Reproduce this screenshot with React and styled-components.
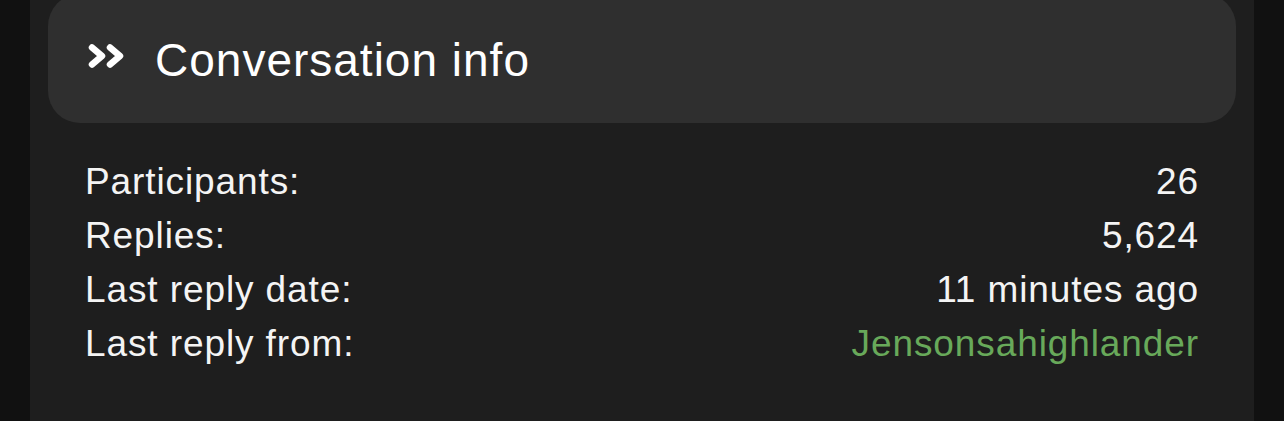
import React from "react";
import styled, { createGlobalStyle } from "styled-components";

const GlobalStyle = createGlobalStyle`
  html, body {
    margin: 0;
    padding: 0;
    background: #111111;
  }
  body {
    font-family: "Liberation Sans", Arial, Helvetica, sans-serif;
    -webkit-font-smoothing: antialiased;
  }
`;

const Page = styled.div`
  display: flex;
  height: 421px;
  overflow: hidden;
  padding: 0 30px;
`;

const Card = styled.section`
  flex: 1;
  background: #1e1e1e;
  padding: 0 18px;
  color: #f4f4f4;
`;

const Header = styled.div`
  margin-top: -6px;
  height: 129px;
  box-sizing: border-box;
  background: #2f2f2f;
  border-radius: 32px;
  display: flex;
  align-items: center;
  gap: 29px;
  padding: 3px 40px 0;
`;

const Icon = styled.svg`
  flex-shrink: 0;
  margin-bottom: 8px;
`;

const Title = styled.h2`
  margin: 0;
  font-size: 46px;
  font-weight: 400;
  letter-spacing: 1px;
  color: #ffffff;
`;

const Info = styled.dl`
  margin: 32px 0 0;
  padding: 0 37px;
`;

const Row = styled.div`
  display: flex;
  justify-content: space-between;
  font-size: 37px;
  line-height: 54px;
  letter-spacing: 0.9px;
`;

const Label = styled.dt`
  margin: 0;
`;

const Value = styled.dd`
  margin: 0;
  color: ${(p) => (p.$link ? "#68a95a" : "#f4f4f4")};
`;

const Chevrons = () => (
  <Icon width="38" height="24" viewBox="0 0 38 24" aria-hidden="true">
    <g
      fill="none"
      stroke="#ffffff"
      strokeWidth="6.5"
      strokeLinecap="round"
      strokeLinejoin="round"
    >
      <polyline points="4,3.5 14,12 4,20.5" />
      <polyline points="22,3.5 32,12 22,20.5" />
    </g>
  </Icon>
);

const rows = [
  { label: "Participants:", value: "26" },
  { label: "Replies:", value: "5,624" },
  { label: "Last reply date:", value: "11 minutes ago" },
  { label: "Last reply from:", value: "Jensonsahighlander", link: true },
];

export default function App() {
  return (
    <>
      <GlobalStyle />
      <Page>
        <Card>
          <Header>
            <Chevrons />
            <Title>Conversation info</Title>
          </Header>
          <Info>
            {rows.map((r) => (
              <Row key={r.label}>
                <Label>{r.label}</Label>
                <Value $link={r.link}>{r.value}</Value>
              </Row>
            ))}
          </Info>
        </Card>
      </Page>
    </>
  );
}
